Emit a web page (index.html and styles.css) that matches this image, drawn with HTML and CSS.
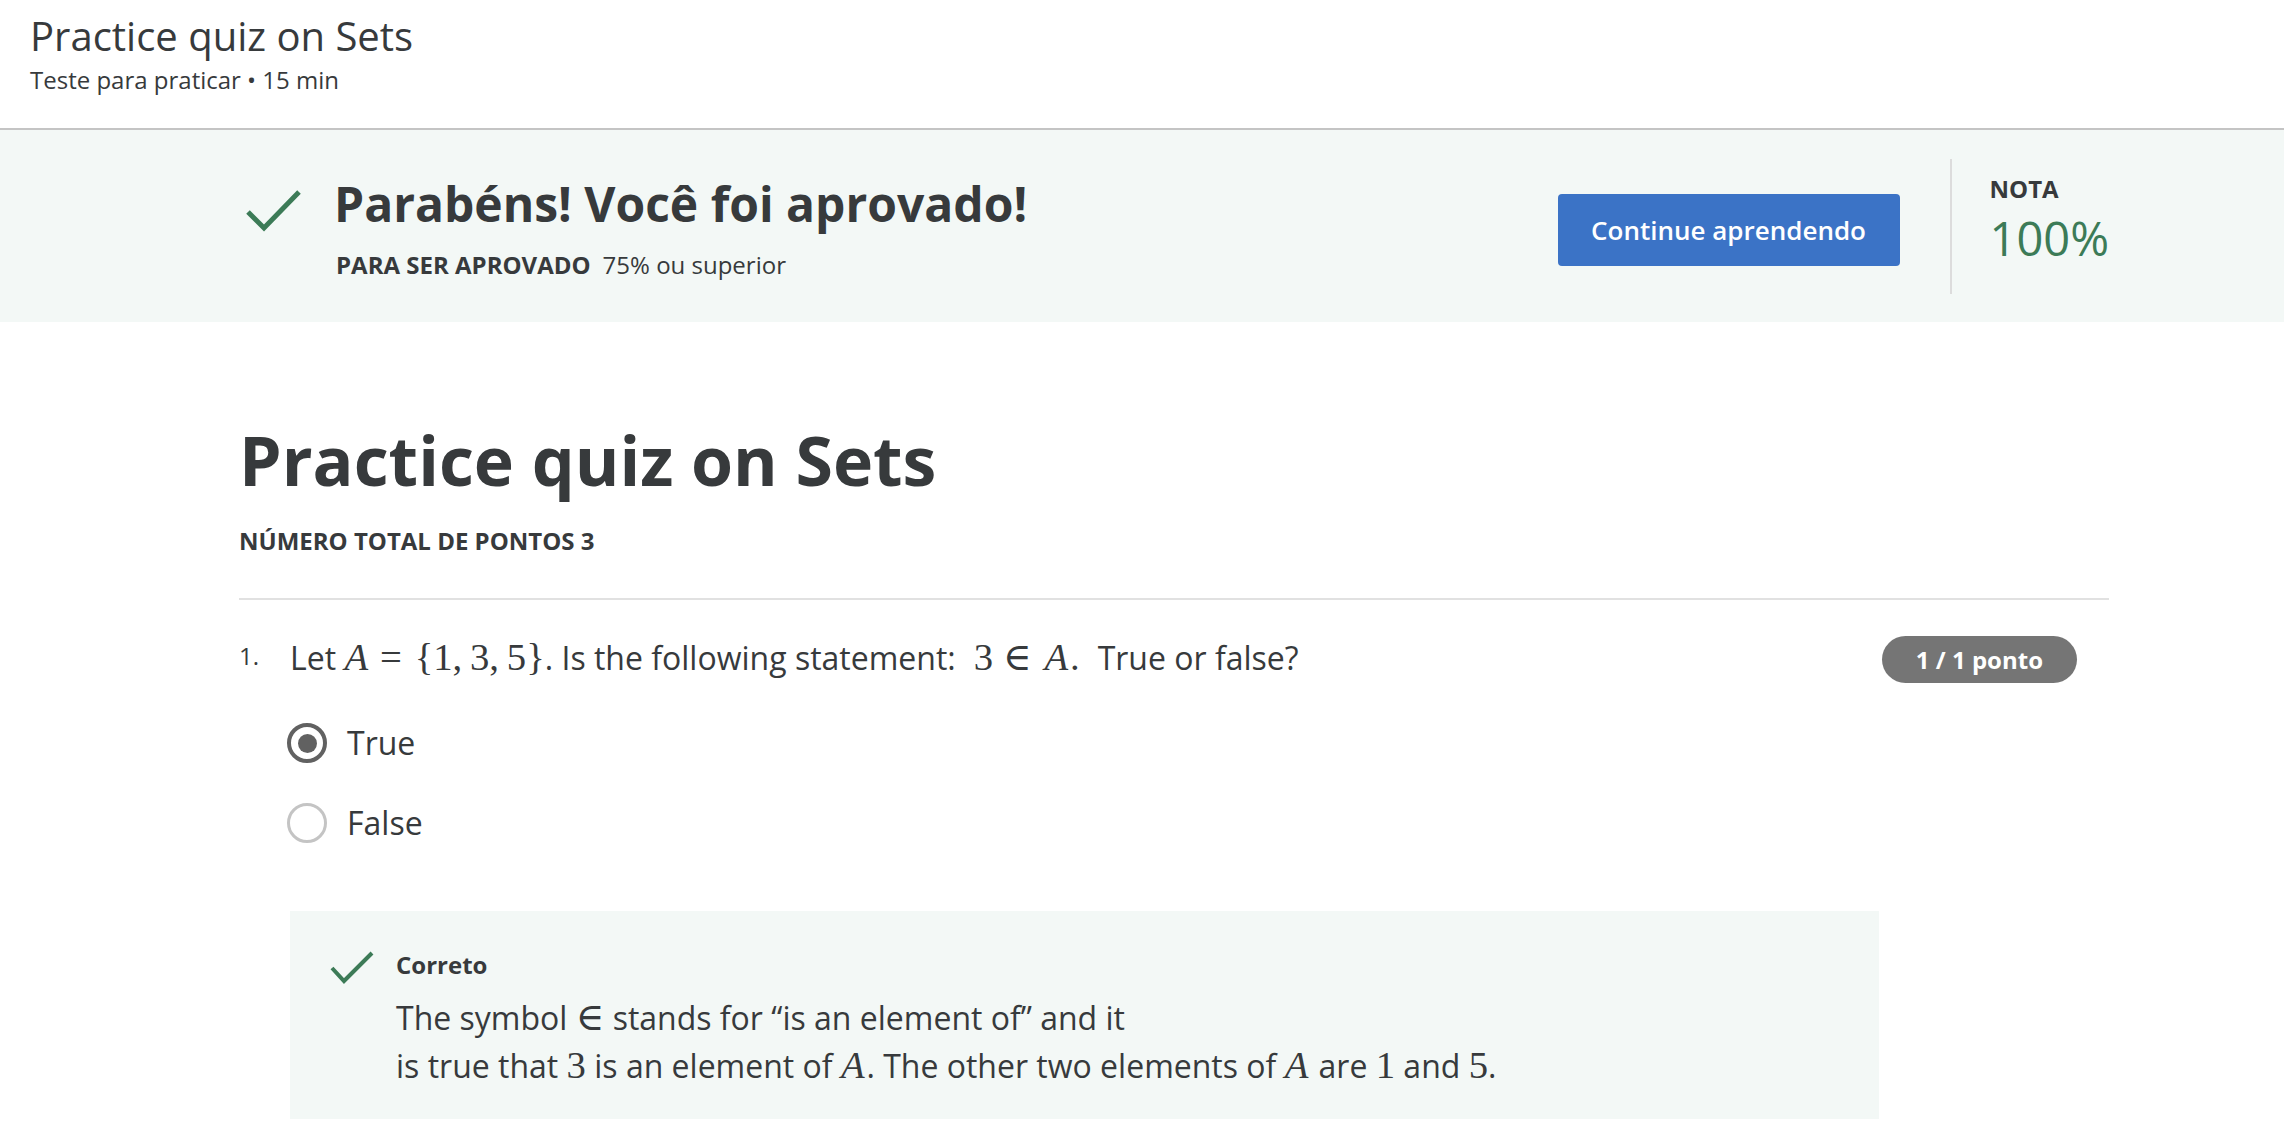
FILE: index.html
```html
<!DOCTYPE html>
<html lang="pt">
<head>
<meta charset="utf-8">
<title>Practice quiz on Sets</title>
<link rel="stylesheet" href="styles.css">
</head>
<body>
<header class="page-header">
  <h1 class="page-title">Practice quiz on Sets</h1>
  <div class="page-sub">Teste para praticar • 15 min</div>
</header>

<section class="banner">
  <div class="banner-inner">
    <div class="banner-left">
      <svg class="banner-check" width="64" height="48" viewBox="0 0 64 48" aria-hidden="true">
        <polyline points="6,24 22,40 57,4" fill="none" stroke="#3c7b57" stroke-width="5"/>
      </svg>
      <div class="banner-text">
        <div class="banner-title">Parabéns! Você foi aprovado!</div>
        <div class="banner-sub"><span class="label">PARA SER APROVADO</span><span class="value">75% ou superior</span></div>
      </div>
    </div>
    <button class="btn-primary" type="button">Continue aprendendo</button>
    <div class="vdivider"></div>
    <div class="score">
      <div class="score-label">NOTA</div>
      <div class="score-value">100%</div>
    </div>
  </div>
</section>

<main class="content">
  <h2 class="quiz-title">Practice quiz on Sets</h2>
  <div class="total">NÚMERO TOTAL DE PONTOS 3</div>
  <hr class="rule">

  <div class="question">
    <div class="q-num">1.</div>
    <div class="q-text">Let <span class="m"><i class="mi">A</i><span class="rel">=</span>{1,<span class="th"></span>3,<span class="th"></span>5}</span>. Is the following statement: <span class="sp"></span><span class="m">3<span class="rel">∈</span><i class="mi">A</i>.</span><span class="sp"></span> True or false?</div>
    <div class="badge">1 / 1 ponto</div>
  </div>

  <div class="options">
    <div class="option">
      <span class="radio checked"></span>
      <span class="opt-label">True</span>
    </div>
    <div class="option">
      <span class="radio"></span>
      <span class="opt-label">False</span>
    </div>
  </div>

  <div class="feedback">
    <svg class="fb-check" width="48" height="36" viewBox="0 0 48 36" aria-hidden="true">
      <polyline points="4,19 16,32 44,4" fill="none" stroke="#3c7b57" stroke-width="4"/>
    </svg>
    <div class="fb-body">
      <div class="fb-title">Correto</div>
      <div class="fb-text">The symbol <span class="m">∈</span> stands for “is an element of” and it<br>is true that <span class="m">3</span> is an element of <span class="m"><i class="mi">A</i></span>. The other two elements of <span class="m"><i class="mi">A</i></span> are <span class="m">1</span> and <span class="m">5</span>.</div>
    </div>
  </div>
</main>
</body>
</html>
```

FILE: styles.css
```css
* { box-sizing: border-box; }

body {
  margin: 0;
  font-family: "Open Sans", "Noto Sans", sans-serif;
  color: #373a3c;
  background: #ffffff;
}

/* header */
.page-header {
  padding: 9px 30px 33px;
  border-bottom: 2px solid #c4c4c4;
}
.page-title {
  margin: 0;
  font-size: 40px;
  line-height: 54px;
  font-weight: 400;
}
.page-sub {
  margin-top: 2px;
  font-size: 24px;
  line-height: 30px;
}

/* banner */
.banner {
  background: #f3f8f6;
  height: 192px;
}
.banner-inner {
  height: 100%;
  margin-left: 242px;
  width: 1867px;
  display: flex;
  align-items: center;
}
.banner-left {
  flex: 1;
  display: flex;
  align-items: flex-start;
  padding-top: 2px;
}
.banner-check {
  flex: none;
  margin-top: 14px;
  margin-right: 28px;
}
.banner-title {
  font-size: 48px;
  line-height: 60px;
  font-weight: 700;
}
.banner-sub {
  margin-top: 15px;
  padding-left: 2px;
  font-size: 24px;
  line-height: 32px;
  display: flex;
  gap: 12px;
}
.banner-sub .label { font-weight: 700; }

.btn-primary {
  flex: none;
  margin-top: 8px;
  width: 342px;
  height: 72px;
  border: none;
  border-radius: 4px;
  background: #3b73c6;
  color: #ffffff;
  font-family: "Open Sans", sans-serif;
  font-size: 26px;
  font-weight: 600;
  padding: 0;
}
.vdivider {
  flex: none;
  width: 2px;
  height: 135px;
  background: #dcdcdc;
  margin: 0 38px 0 50px;
}
.score {
  flex: none;
  margin-bottom: 12px;
}
.score-label {
  font-size: 24px;
  line-height: 30px;
  font-weight: 700;
}
.score-value {
  margin-top: 6px;
  font-size: 47px;
  line-height: 56px;
  color: #3c7b57;
}

/* main */
.content {
  margin-left: 239px;
  width: 1870px;
}
.quiz-title {
  margin: 98px 0 0;
  font-size: 68px;
  line-height: 80px;
  font-weight: 700;
}
.total {
  margin-top: 26px;
  font-size: 24px;
  line-height: 30px;
  font-weight: 700;
}
.rule {
  margin: 42px 0 0;
  border: none;
  height: 2px;
  background: #e1e1e1;
}

.question {
  margin-top: 34px;
  display: flex;
  align-items: flex-start;
}
.q-num {
  flex: none;
  width: 51px;
  font-size: 24px;
  line-height: 43px;
}
.q-text {
  flex: 1;
  font-size: 32px;
  line-height: 48px;
}
.badge {
  flex: none;
  margin: 2px 32px 0 0;
  height: 47px;
  line-height: 47px;
  padding: 0 34px;
  border-radius: 24px;
  background: #757575;
  color: #ffffff;
  font-size: 24px;
  font-weight: 700;
}

.m {
  font-family: "Liberation Serif", "DejaVu Serif", serif;
  font-size: 1.21em;
  line-height: 0;
}
.mi { font-style: italic; padding-right: 0.05em; }
.rel { margin: 0 0.33em 0 0.26em; }
.th { display: inline-block; width: 0.2em; }
.sp { display: inline-block; width: 0.3em; }

.options {
  margin-top: 40px;
  padding-left: 48px;
  display: flex;
  flex-direction: column;
  gap: 40px;
}
.option {
  display: flex;
  align-items: flex-start;
  gap: 20px;
}
.radio {
  flex: none;
  width: 40px;
  height: 40px;
  border-radius: 50%;
  border: 3px solid #c4c4c4;
  display: flex;
  align-items: center;
  justify-content: center;
}
.radio.checked {
  border: 4px solid #616161;
}
.radio.checked::after {
  content: "";
  width: 19px;
  height: 19px;
  border-radius: 50%;
  background: #616161;
}
.opt-label {
  font-size: 32px;
  line-height: 40px;
}

.feedback {
  margin: 68px 0 0 51px;
  width: 1589px;
  background: #f3f8f6;
  padding: 38px 0 29px 38px;
  display: flex;
  align-items: flex-start;
}
.fb-check {
  flex: none;
  margin-right: 20px;
}
.fb-title {
  padding-top: 2px;
  font-size: 24px;
  line-height: 28px;
  font-weight: 700;
}
.fb-text {
  margin-top: 15px;
  font-size: 32px;
  line-height: 48px;
}
```
